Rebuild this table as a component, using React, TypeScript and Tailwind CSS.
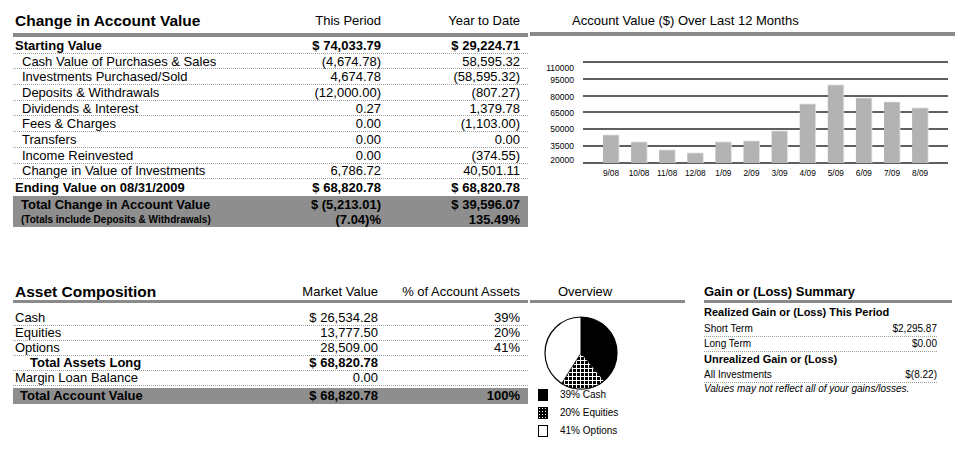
import React from "react";

const changeRows = [
  { label: "Starting Value", a: "$ 74,033.79", b: "$ 29,224.71", bold: true },
  { label: "Cash Value of Purchases & Sales", a: "(4,674.78)", b: "58,595.32" },
  { label: "Investments Purchased/Sold", a: "4,674.78", b: "(58,595.32)" },
  { label: "Deposits & Withdrawals", a: "(12,000.00)", b: "(807.27)" },
  { label: "Dividends & Interest", a: "0.27", b: "1,379.78" },
  { label: "Fees & Charges", a: "0.00", b: "(1,103.00)" },
  { label: "Transfers", a: "0.00", b: "0.00" },
  { label: "Income Reinvested", a: "0.00", b: "(374.55)" },
  { label: "Change in Value of Investments", a: "6,786.72", b: "40,501.11" },
  { label: "Ending Value on 08/31/2009", a: "$ 68,820.78", b: "$ 68,820.78", bold: true, last: true },
];

const assetRows = [
  { label: "Cash", v: "$ 26,534.28", p: "39%" },
  { label: "Equities", v: "13,777.50", p: "20%" },
  { label: "Options", v: "28,509.00", p: "41%" },
  { label: "Total Assets Long", v: "$ 68,820.78", p: "", bold: true },
  { label: "Margin Loan Balance", v: "0.00", p: "" },
];

const months = ["9/08", "10/08", "11/08", "12/08", "1/09", "2/09", "3/09", "4/09", "5/09", "6/09", "7/09", "8/09"];
const barTops = [98, 105, 113, 116, 105, 104, 94, 67, 48, 61, 65, 71];
const gridY = [25, 42, 59, 75, 92, 109, 126];
const yLabels = [
  { t: "110000", y: 32 },
  { t: "95000", y: 44 },
  { t: "80000", y: 61 },
  { t: "65000", y: 77 },
  { t: "50000", y: 93 },
  { t: "35000", y: 110 },
  { t: "20000", y: 124 },
];

function AccountChart() {
  return (
    <svg width="437" height="150" className="block">
      {gridY.map((y) => (
        <line key={y} x1="53" x2="418" y1={y} y2={y} stroke="#2a2a2a" strokeWidth="1.3" />
      ))}
      {yLabels.map((l) => (
        <text key={l.t} x="44" y={l.y} textAnchor="end" dominantBaseline="middle" fontSize="8.5" fill="#000">
          {l.t}
        </text>
      ))}
      {months.map((m, i) => {
        const x = 73 + i * 28.1;
        return (
          <g key={m}>
            <rect x={x} y={barTops[i]} width="16" height={126 - barTops[i]} fill="#b3b3b3" />
            <line x1={x + 16} x2={x + 16} y1={barTops[i]} y2="126" stroke="#e6e6e6" strokeWidth="0.8" />
            <line x1={x} x2={x + 16} y1={barTops[i]} y2={barTops[i]} stroke="#e0e0e0" strokeWidth="0.8" />
            <text x={x + 8} y="137" textAnchor="middle" dominantBaseline="middle" fontSize="8.3" fill="#000">
              {m}
            </text>
          </g>
        );
      })}
    </svg>
  );
}

function Pie() {
  // cash 0 -> 140.4deg, equities 140.4 -> 212.4deg, options the rest
  return (
    <svg width="76" height="76" className="block">
      <defs>
        <pattern id="grid" width="4" height="4" patternUnits="userSpaceOnUse">
          <rect width="4" height="4" fill="#000" />
          <rect x="1" y="0" width="1" height="4" fill="#fff" />
          <rect x="0" y="1" width="4" height="1" fill="#fff" />
        </pattern>
      </defs>
      <circle cx="38" cy="38" r="36" fill="#fff" stroke="#000" strokeWidth="1.2" />
      <path d="M38 38 L38 2 A36 36 0 0 1 60.95 65.74 Z" fill="#000" />
      <path d="M38 38 L60.95 65.74 A36 36 0 0 1 18.71 68.39 Z" fill="url(#grid)" stroke="#000" strokeWidth="0.8" />
      <line x1="38" y1="38" x2="38" y2="2" stroke="#000" strokeWidth="1" />
    </svg>
  );
}

function LegendSwatch({ kind }: { kind: "solid" | "grid" | "empty" }) {
  if (kind === "solid") return <div className="h-[12px] w-[10px] bg-black" />;
  if (kind === "empty") return <div className="h-[12px] w-[10px] border border-black bg-white" />;
  return (
    <svg width="10" height="12" className="block">
      <defs>
        <pattern id="grid2" width="3" height="3" patternUnits="userSpaceOnUse">
          <rect width="3" height="3" fill="#000" />
          <rect x="1" y="1" width="1" height="1" fill="#fff" />
        </pattern>
      </defs>
      <rect width="10" height="12" fill="url(#grid2)" stroke="#000" />
    </svg>
  );
}

export default function App() {
  return (
    <div className="h-[463px] w-[967px] overflow-hidden bg-white font-['Liberation_Sans',Arial,sans-serif] text-black">
      {/* top half */}
      <div className="flex pt-[8px]">
        <section className="ml-[13px] w-[515px]">
          <div className="grid h-[25px] grid-cols-[1fr_91px_139px] items-center pr-[8px]">
            <h2 className="pl-[2px] text-[15.5px] font-bold leading-none">Change in Account Value</h2>
            <div className="text-right text-[13px] leading-none">This Period</div>
            <div className="text-right text-[13px] leading-none">Year to Date</div>
          </div>
          <div className="h-[4px] bg-[#8a8a8a]" />
          <div className="mt-[1px]">
            {changeRows.map((r) => (
              <div
                key={r.label}
                className={`grid h-[15.7px] grid-cols-[1fr_91px_139px] items-center pr-[8px] text-[13px] leading-none ${
                  r.last ? "" : "border-b border-dotted border-[#a0a0a0]"
                } ${r.bold ? "font-bold" : ""}`}
              >
                <div className={r.bold ? "pl-[2px]" : "pl-[9px]"}>{r.label}</div>
                <div className="text-right">{r.a}</div>
                <div className="text-right">{r.b}</div>
              </div>
            ))}
          </div>
          <div className="mt-[1px] grid h-[31px] grid-cols-[1fr_91px_139px] bg-[#8e8e8e] pr-[8px] pt-[2px] font-bold leading-none">
            <div className="pl-[8px]">
              <div className="text-[13px]">Total Change in Account Value</div>
              <div className="mt-[4px] text-[10px]">(Totals include Deposits &amp; Withdrawals)</div>
            </div>
            <div className="text-right text-[13px]">
              <div>$ (5,213.01)</div>
              <div className="mt-[2px]">(7.04)%</div>
            </div>
            <div className="text-right text-[13px]">
              <div>$ 39,596.07</div>
              <div className="mt-[2px]">135.49%</div>
            </div>
          </div>
        </section>

        <section className="ml-[2px] w-[437px]">
          <div className="flex h-[24px] items-center pl-[42px] text-[13px] leading-none">
            Account Value ($) Over Last 12 Months
          </div>
          <div className="h-[4px] w-[425px] bg-[#8a8a8a]" />
          <div className="mt-[1px]">
            <AccountChart />
          </div>
        </section>
      </div>

      {/* bottom half */}
      <div className="mt-[56px] flex">
        <section className="ml-[13px] w-[515px]">
          <div className="grid h-[17px] grid-cols-[1fr_88px_142px] items-center pr-[8px]">
            <h2 className="pl-[2px] text-[15.5px] font-bold leading-none">Asset Composition</h2>
            <div className="text-right text-[13px] leading-none">Market Value</div>
            <div className="text-right text-[13px] leading-none">% of Account Assets</div>
          </div>
          <div className="h-[3px] bg-[#8a8a8a]" />
          <div className="mt-[8px]">
            {assetRows.map((r) => (
              <div
                key={r.label}
                className={`grid h-[15px] grid-cols-[1fr_88px_142px] items-center border-b border-dotted border-[#a0a0a0] pr-[8px] text-[13px] leading-none ${
                  r.bold ? "font-bold" : ""
                }`}
              >
                <div className={r.bold ? "pl-[17px]" : "pl-[2px]"}>{r.label}</div>
                <div className="text-right">{r.v}</div>
                <div className="text-right">{r.p}</div>
              </div>
            ))}
          </div>
          <div className="mt-[2px] grid h-[16px] grid-cols-[1fr_88px_142px] items-center bg-[#8e8e8e] pr-[8px] text-[13px] font-bold leading-none">
            <div className="pl-[7px]">Total Account Value</div>
            <div className="text-right">$ 68,820.78</div>
            <div className="text-right">100%</div>
          </div>
        </section>

        <section className="ml-[2px] w-[155px]">
          <div className="flex h-[17px] items-center pl-[28px] text-[13px] leading-none">Overview</div>
          <div className="h-[3px] bg-[#8a8a8a]" />
          <div className="ml-[13px] mt-[12px]">
            <Pie />
          </div>
          <div className="ml-[8px] mt-[-5px] flex flex-col text-[10px] leading-none">
            {[
              { k: "solid" as const, t: "39% Cash" },
              { k: "grid" as const, t: "20% Equities" },
              { k: "empty" as const, t: "41% Options" },
            ].map((l) => (
              <div key={l.t} className="flex h-[18px] items-center">
                <LegendSwatch kind={l.k} />
                <span className="ml-[12px]">{l.t}</span>
              </div>
            ))}
          </div>
        </section>

        <section className="ml-[19px] w-[248px]">
          <div className="flex h-[17px] items-center text-[13px] font-bold leading-none">Gain or (Loss) Summary</div>
          <div className="h-[3px] bg-[#8a8a8a]" />
          <div className="mt-[2px] w-[233px]">
            <div className="flex h-[15px] items-center text-[11px] font-bold leading-none">
              Realized Gain or (Loss) This Period
            </div>
            <div className="mt-[3px] flex h-[14px] items-center justify-between border-b border-dotted border-[#a0a0a0] text-[10px] leading-none">
              <span>Short Term</span>
              <span>$2,295.87</span>
            </div>
            <div className="flex h-[15px] items-center justify-between border-b border-dotted border-[#a0a0a0] text-[10px] leading-none">
              <span>Long Term</span>
              <span>$0.00</span>
            </div>
            <div className="flex h-[15px] items-center text-[11px] font-bold leading-none">Unrealized Gain or (Loss)</div>
            <div className="mt-[2px] flex h-[14px] items-center justify-between border-b border-dotted border-[#a0a0a0] text-[10px] leading-none">
              <span>All Investments</span>
              <span>$(8.22)</span>
            </div>
            <div className="text-[10px] italic leading-[12px]">Values may not reflect all of your gains/losses.</div>
          </div>
        </section>
      </div>
    </div>
  );
}
